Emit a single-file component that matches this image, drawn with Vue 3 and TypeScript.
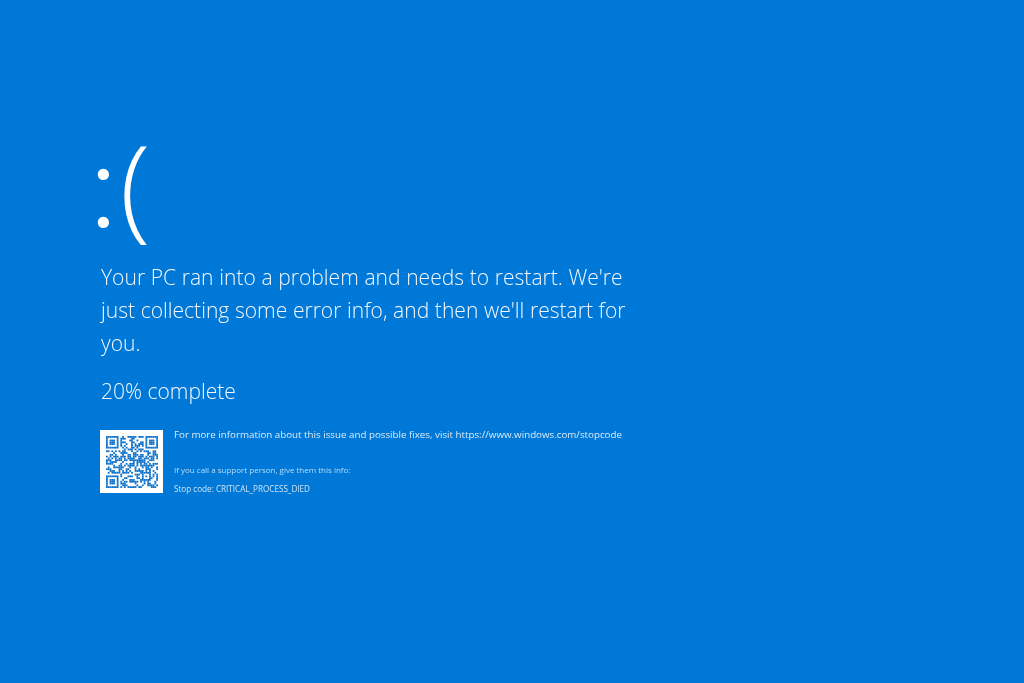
<script setup lang="ts">
import { computed } from 'vue';

const size = 29;

// finder and alignment patterns are fixed, the rest is filler that looks like a QR code
const inSquare = (x: number, y: number, ox: number, oy: number, n: number) => {
  const dx = x - ox;
  const dy = y - oy;
  if (dx < 0 || dy < 0 || dx >= n || dy >= n) return false;
  if (dx === 0 || dy === 0 || dx === n - 1 || dy === n - 1) return true;
  return dx >= 2 && dx < n - 2 && dy >= 2 && dy < n - 2;
};

const nearFinder = (x: number, y: number) =>
  (x < 8 && y < 8) || (x >= size - 8 && y < 8) || (x < 8 && y >= size - 8);

const inAlign = (x: number, y: number) => x >= 20 && x <= 24 && y >= 20 && y <= 24;

const modules = computed(() => {
  const cells: { x: number; y: number }[] = [];
  let seed = 2127;
  for (let y = 0; y < size; y++) {
    for (let x = 0; x < size; x++) {
      seed = (seed * 1103515245 + 12345) & 0x7fffffff;
      let on = (seed >> 16) % 100 < 52;
      if (nearFinder(x, y)) {
        on = inSquare(x, y, 0, 0, 7) || inSquare(x, y, size - 7, 0, 7) || inSquare(x, y, 0, size - 7, 7);
      } else if (inAlign(x, y)) {
        on = inSquare(x, y, 20, 20, 5);
      }
      if (on) cells.push({ x, y });
    }
  }
  return cells;
});
</script>

<template>
  <main class="screen">
    <div class="face"><span class="eyes">:</span><span class="mouth">(</span></div>
    <p class="message">Your PC ran into a problem and needs to restart. We're just collecting some error info, and then we'll restart for you.</p>
    <p class="progress">20% complete</p>
    <section class="details">
      <div class="qr">
        <svg :viewBox="`0 0 ${size} ${size}`" width="52" height="52">
          <rect v-for="m in modules" :key="`${m.x}-${m.y}`" :x="m.x" :y="m.y" width="1" height="1" fill="#0a6fc8" />
        </svg>
      </div>
      <div class="info">
        <p class="more">For more information about this issue and possible fixes, visit https://www.windows.com/stopcode</p>
        <p class="support">If you call a support person, give them this info:</p>
        <p class="code">Stop code: CRITICAL_PROCESS_DIED</p>
      </div>
    </section>
  </main>
</template>

<style>
html,
body {
  margin: 0;
  background: #0078d7;
}
</style>

<style scoped>
.screen {
  box-sizing: border-box;
  width: 1024px;
  height: 683px;
  padding: 116px 0 0 100px;
  overflow: hidden;
  background: #0078d7;
  color: #f2f8fd;
  font-family: "Open Sans", "Noto Sans", sans-serif;
  font-weight: 300;
  filter: blur(0.35px);
}

.face {
  display: flex;
  align-items: baseline;
  height: 140px;
  margin-left: -11px;
  line-height: 130px;
  color: #fff;
}

.eyes {
  font-family: Lato, "Open Sans", sans-serif;
  font-size: 120px;
  font-weight: 300;
}

.mouth {
  margin-left: 2px;
  font-size: 113px;
}

.message {
  width: 535px;
  margin: 5px 0 0 1px;
  font-size: 21.05px;
  line-height: 33px;
  word-spacing: 0.2px;
}

.progress {
  margin: 15px 0 0 1px;
  font-size: 21.05px;
  line-height: 33px;
}

.details {
  display: flex;
  gap: 11px;
  margin-top: 22px;
}

.qr {
  display: flex;
  align-items: center;
  justify-content: center;
  width: 63px;
  height: 63px;
  background: #fff;
}

.info {
  font-weight: 400;
  color: #dcecf9;
}

.more {
  margin: -1px 0 0;
  font-size: 9.78px;
  line-height: 12px;
}

.support {
  margin: 23px 0 0;
  font-size: 8px;
  line-height: 12px;
  color: #b9dcf4;
}

.code {
  margin: 7px 0 0;
  font-size: 8.15px;
  line-height: 12px;
  color: #cfe5f7;
}
</style>
